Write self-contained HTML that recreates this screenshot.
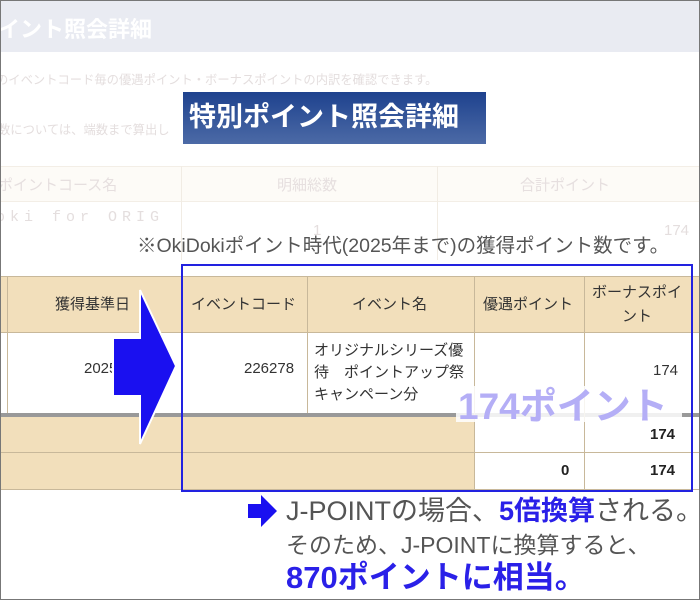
<!DOCTYPE html>
<html><head><meta charset="utf-8"><style>
*{margin:0;padding:0;box-sizing:border-box}
body{width:700px;height:600px;position:relative;overflow:hidden;background:#fff;font-family:"Liberation Sans","Noto Sans CJK JP",sans-serif}
.a{position:absolute;white-space:nowrap}
.frame{position:absolute;left:0;top:0;width:700px;height:600px;border:1px solid #777;z-index:50;pointer-events:none}
</style></head><body>
<div class="a" style="left:0;top:0;width:700px;height:52px;background:#e9ebf2"></div>
<div class="a" style="left:-2px;top:12px;font-size:22px;font-weight:bold;color:#fff">イント照会詳細</div>
<div class="a" style="left:-4px;top:70px;font-size:12.3px;color:#e4dede">のイベントコード毎の優遇ポイント・ボーナスポイントの内訳を確認できます。</div>
<div class="a" style="left:-2px;top:120px;font-size:12.3px;color:#e4dede">数については、端数まで算出し</div>
<div class="a" style="left:183px;top:92px;width:303px;height:52px;background:linear-gradient(#1e428e,#4c6aa6)"></div>
<div class="a" style="left:189px;top:99px;font-size:27px;font-weight:bold;color:#fff;line-height:36px">特別ポイント照会詳細</div>
<div class="a" style="left:0;top:166px;width:700px;height:36px;background:#fdfbf7;border-top:1px solid #f3eee6;border-bottom:1px solid #f3eee6"></div>
<div class="a" style="left:181px;top:166px;width:1px;height:94px;background:#f1ece4"></div>
<div class="a" style="left:437px;top:166px;width:1px;height:94px;background:#f1ece4"></div>
<div class="a" style="left:-2px;top:174px;font-size:15px;color:#e6dfdf">ポイントコース名</div>
<div class="a" style="left:277px;top:174px;font-size:15px;color:#e6dfdf">明細総数</div>
<div class="a" style="left:520px;top:174px;font-size:15px;color:#e6dfdf">合計ポイント</div>
<div class="a" style="left:-4px;top:209px;font-size:15px;color:#e4dede;font-family:'Liberation Mono',monospace;letter-spacing:5px">oki for ORIG</div>
<div class="a" style="left:313px;top:222px;font-size:15px;color:#e4dede">1</div>
<div class="a" style="left:664px;top:222px;font-size:15px;color:#e4dede">174</div>
<div class="a" style="left:137px;top:229px;font-size:19.5px;color:#555">※OkiDokiポイント時代(2025年まで)の獲得ポイント数です。</div>
<div class="a" style="left:0;top:276px;width:700px;height:57px;background:#f2dfbb;border-top:1px solid #c8b89a;border-bottom:1px solid #c8b89a"></div>
<div class="a" style="left:0;top:413px;width:700px;height:4px;background:#999"></div>
<div class="a" style="left:0;top:417px;width:474px;height:72px;background:#f2dfbb"></div>
<div class="a" style="left:0;top:452px;width:700px;height:1px;background:#c8b89a"></div>
<div class="a" style="left:0;top:489px;width:700px;height:1px;background:#c8b89a"></div>
<div class="a" style="left:7px;top:276px;width:1px;height:137px;background:#c8b89a"></div>
<div class="a" style="left:307px;top:276px;width:1px;height:137px;background:#c8b89a"></div>
<div class="a" style="left:474px;top:276px;width:1px;height:213px;background:#c8b89a"></div>
<div class="a" style="left:584px;top:276px;width:1px;height:213px;background:#c8b89a"></div>
<div class="a" style="left:55px;top:293px;font-size:15px;color:#333">獲得基準日</div>
<div class="a" style="left:191px;top:293px;font-size:15px;color:#333">イベントコード</div>
<div class="a" style="left:352px;top:293px;font-size:15px;color:#333">イベント名</div>
<div class="a" style="left:483px;top:293px;font-size:15px;color:#333">優遇ポイント</div>
<div class="a" style="left:592px;top:281px;font-size:15px;color:#333;line-height:24px;text-align:center;width:90px;white-space:normal">ボーナスポイ<br>ント</div>
<div class="a" style="left:84px;top:360px;font-size:15px;color:#333">2025</div>
<div class="a" style="left:244px;top:360px;font-size:15px;color:#333">226278</div>
<div class="a" style="left:314px;top:340px;font-size:15px;color:#333;line-height:22px">オリジナルシリーズ優<br>待　ポイントアップ祭<br>キャンペーン分</div>
<div class="a" style="left:653px;top:362px;font-size:15px;color:#333">174</div>
<div class="a" style="left:650px;top:426px;font-size:15px;font-weight:bold;color:#222">174</div>
<div class="a" style="left:561px;top:462px;font-size:15px;font-weight:bold;color:#222">0</div>
<div class="a" style="left:650px;top:462px;font-size:15px;font-weight:bold;color:#222">174</div>
<div class="a" style="left:456px;top:386px;width:226px;height:36px;background:rgba(255,255,255,.85)"></div>
<div class="a" style="left:458px;top:376px;font-size:37px;font-weight:bold;color:#b4aef6">174ポイント</div>
<div class="a" style="left:181px;top:264px;width:512px;height:228px;border:2px solid #2222e0"></div>
<svg class="a" style="left:110px;top:286px" width="70" height="164"><path d="M3 52 H30 V4 L66 80 L30 158 V110 H3 Z" fill="#1a10f0" stroke="#fff" stroke-width="2"/></svg>
<svg class="a" style="left:247px;top:494px" width="32" height="36"><path d="M1 10 H14 V1 L30 17 L14 33 V24 H1 Z" fill="#1a10f0"/></svg>
<div class="a" style="left:286px;top:494px;font-size:27px;color:#555;line-height:34px">J-POINTの場合、<b style="color:#2a20e8">5倍換算</b>される。</div>
<div class="a" style="left:286px;top:530px;font-size:23px;color:#555;line-height:30px">そのため、J-POINTに換算すると、</div>
<div class="a" style="left:286px;top:559px;font-size:31px;font-weight:bold;color:#2a20e8;line-height:38px">870ポイントに相当。</div>
<div class="frame"></div>
</body></html>
